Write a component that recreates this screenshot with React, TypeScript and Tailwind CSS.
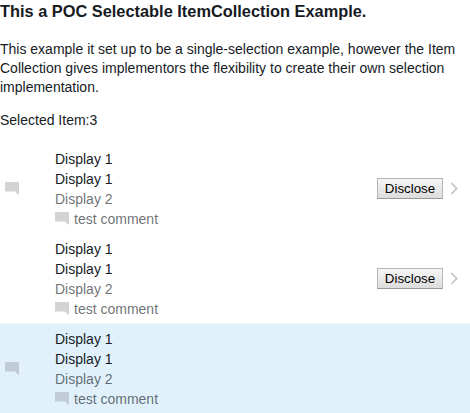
import React from "react";

function Comment() {
  return (
    <svg width="14" height="13" viewBox="0 0 14 13" className="block shrink-0" fill="currentColor">
      <path d="M0 0H14V12.5H13L10 9.5H0Z" />
    </svg>
  );
}

function Row({ flag, disclose, selected }: { flag?: boolean; disclose?: boolean; selected?: boolean }) {
  const iconColor = selected ? "text-[#c0cbd6]" : "text-[#d3d3d5]";
  return (
    <li className={`flex items-center ${selected ? "-mt-px h-[91px] border-t border-[#f2f9fd] bg-[#e0f1fc]" : "h-[90px]"}`}>
      <div className={`w-[55px] shrink-0 pb-[1px] pl-[5px] ${iconColor}`}>{flag && <Comment />}</div>
      <div className="grow leading-5">
        <p>Display 1</p>
        <p>Display 1</p>
        <p className="text-[#161b1f]/65">Display 2</p>
        <p className="flex items-center gap-[5px] text-[#161b1f]/65">
          <span className={`pb-[1px] ${iconColor}`}><Comment /></span>
          test comment
        </p>
      </div>
      {disclose && (
        <div className="flex items-center pr-3 pb-px">
          <button className="h-[21px] w-[66px] border border-[#b5b5b5] border-b-[#999] bg-linear-to-b from-[#f6f6f6] to-[#dddddd] text-[13.33px] leading-none text-black">
            Disclose
          </button>
          <svg width="8" height="14" viewBox="0 0 8 14" className="ml-[7px]" fill="none" stroke="#c0c3c5" strokeWidth="1.7">
            <path d="M1.2 1L6.7 6.5L1.2 12" />
          </svg>
        </div>
      )}
    </li>
  );
}

export default function App() {
  return (
    <main className="h-[413px] w-[470px] overflow-hidden bg-white font-['Liberation_Sans',Arial,sans-serif] text-[14px] text-[#161b1f]">
      <h1 className="text-[16.38px] leading-[22px] font-bold">This a POC Selectable ItemCollection Example.</h1>
      <p className="mt-[18px] leading-[19px]">This example it set up to be a single-selection example, however the Item Collection gives implementors the flexibility to create their own selection implementation.</p>
      <p className="mt-[14px] leading-[19px]">Selected Item:3</p>
      <ul className="mt-[14px]">
        <Row flag disclose />
        <Row disclose />
        <Row flag selected />
      </ul>
    </main>
  );
}
